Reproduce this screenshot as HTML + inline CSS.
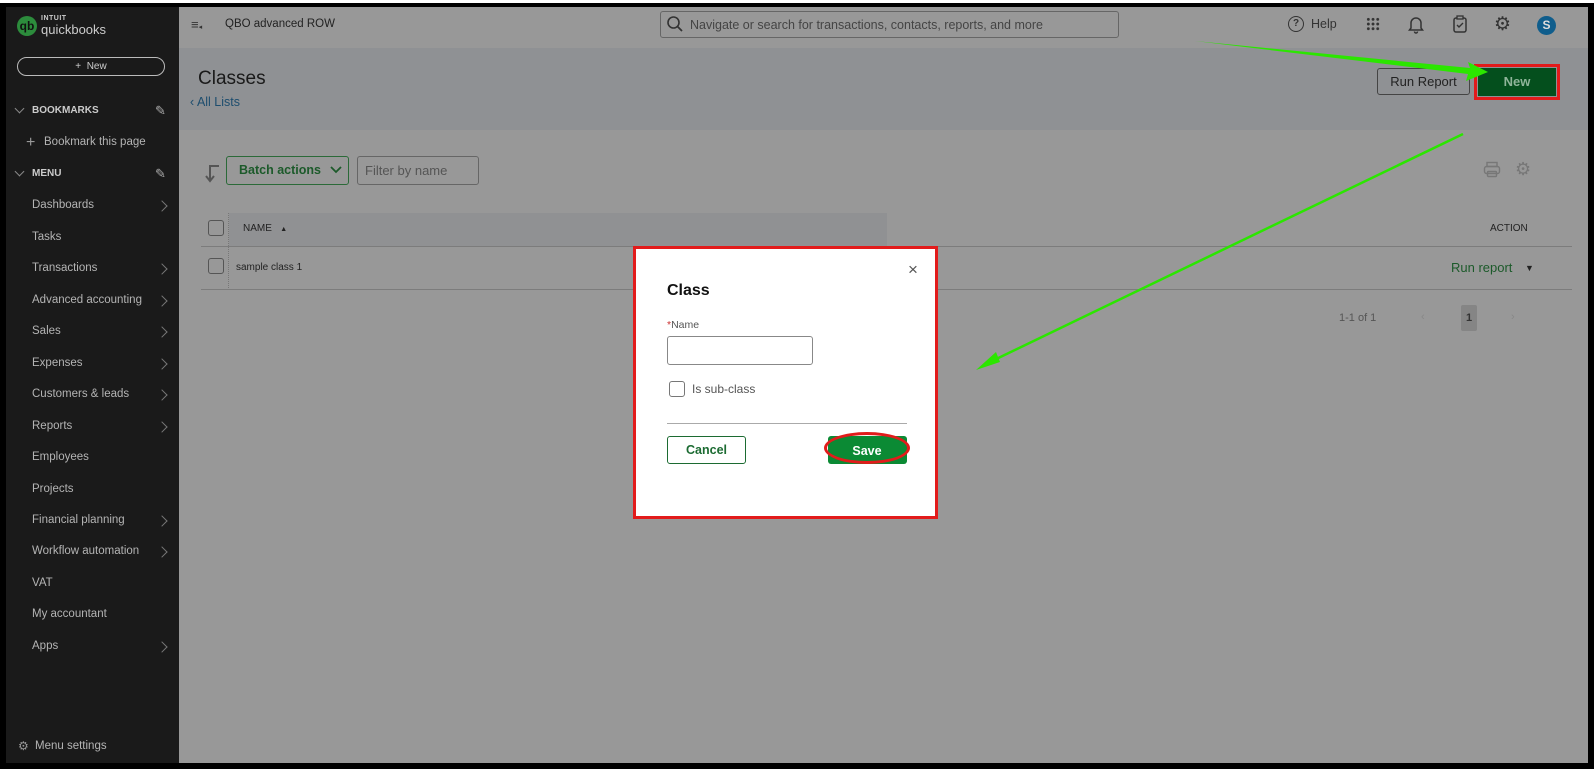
<!DOCTYPE html>
<html><head><meta charset="utf-8"><style>
*{margin:0;padding:0;box-sizing:border-box}
body{width:1594px;height:771px;background:#fff;position:relative;overflow:hidden;font-family:"Liberation Sans",Arial,sans-serif}
.a{position:absolute}
.frame{left:0;top:3px;width:1594px;height:766px;background:#000}
.main{left:6px;top:7px;width:1582px;height:756px;background:#989898;overflow:hidden}
.side{left:6px;top:7px;width:173px;height:756px;background:#1a1a1a;color:#b0b0b0;font-size:11px}
.mi{position:absolute;left:26px;font-size:11.5px;color:#b4b4b4}
.chev{position:absolute;left:152px;width:8px;height:8px;border-right:1.3px solid #777;border-top:1.3px solid #777;transform:rotate(45deg)}
.top{left:179px;top:7px;width:1409px;height:41px;background:#989898}
.hdr{left:179px;top:48px;width:1409px;height:82px;background:#8f9194}
</style></head><body>
<div class="a frame"></div>
<div class="a main"></div>
<div class="a top"></div>
<div class="a hdr"></div>
<div class="a side">
  <div class="a" style="left:11px;top:9px;width:20px;height:20px;border-radius:50%;background:#2c8c3c;color:#111;font-size:12px;font-weight:bold;text-align:center;line-height:20px">qb</div>
  <div class="a" style="left:35px;top:8px;font-size:7px;font-weight:bold;color:#ccc;letter-spacing:.5px">INTUIT</div>
  <div class="a" style="left:35px;top:15px;font-size:13px;color:#ccc">quickbooks</div>
  <div class="a" style="left:11px;top:50px;width:148px;height:19px;border:1px solid #bbb;border-radius:10px;text-align:center;font-size:10px;line-height:17px;color:#ccc">+&nbsp; New</div>
  <div class="a" style="left:10px;top:98px;width:7px;height:7px;border-left:1px solid #888;border-bottom:1px solid #888;transform:rotate(-45deg)"></div>
  <div class="a" style="left:26px;top:98px;font-size:10px;font-weight:bold;color:#ccc">BOOKMARKS</div>
  <div class="a" style="left:149px;top:96px;color:#aaa;font-size:13px">✎</div>
  <div class="a" style="left:20px;top:127px;font-size:16px;color:#999">+</div>
  <div class="a" style="left:38px;top:129px;font-size:11.5px;color:#b4b4b4">Bookmark this page</div>
  <div class="a" style="left:10px;top:161px;width:7px;height:7px;border-left:1px solid #888;border-bottom:1px solid #888;transform:rotate(-45deg)"></div>
  <div class="a" style="left:26px;top:161px;font-size:10px;font-weight:bold;color:#ccc">MENU</div>
  <div class="a" style="left:149px;top:159px;color:#aaa;font-size:13px">✎</div>
  <div class="mi" style="top:192px">Dashboards</div><div class="chev" style="top:195px"></div>
  <div class="mi" style="top:224px">Tasks</div>
  <div class="mi" style="top:255px">Transactions</div><div class="chev" style="top:258px"></div>
  <div class="mi" style="top:287px">Advanced accounting</div><div class="chev" style="top:290px"></div>
  <div class="mi" style="top:318px">Sales</div><div class="chev" style="top:321px"></div>
  <div class="mi" style="top:350px">Expenses</div><div class="chev" style="top:353px"></div>
  <div class="mi" style="top:381px">Customers &amp; leads</div><div class="chev" style="top:384px"></div>
  <div class="mi" style="top:413px">Reports</div><div class="chev" style="top:416px"></div>
  <div class="mi" style="top:444px">Employees</div>
  <div class="mi" style="top:476px">Projects</div>
  <div class="mi" style="top:507px">Financial planning</div><div class="chev" style="top:510px"></div>
  <div class="mi" style="top:538px">Workflow automation</div><div class="chev" style="top:541px"></div>
  <div class="mi" style="top:570px">VAT</div>
  <div class="mi" style="top:601px">My accountant</div>
  <div class="mi" style="top:633px">Apps</div><div class="chev" style="top:636px"></div>
  <div class="a" style="left:12px;top:732px;font-size:12px;color:#999">⚙</div>
  <div class="a" style="left:29px;top:733px;font-size:11.5px;color:#b4b4b4">Menu settings</div>
</div>
<div class="a" style="left:191px;top:17px;font-size:13px;color:#333">≡<span style="font-size:7px">◂</span></div>
<div class="a" style="left:225px;top:18px;font-size:11.5px;color:#222">QBO advanced ROW</div>
<div class="a" style="left:660px;top:11px;width:459px;height:27px;border:1px solid #666;border-radius:3px"></div>
<svg class="a" style="left:666px;top:15px" width="18" height="18"><circle cx="7.5" cy="7.5" r="5.5" fill="none" stroke="#333" stroke-width="1.6"/><line x1="11.5" y1="11.5" x2="16" y2="16" stroke="#333" stroke-width="1.8"/></svg>
<div class="a" style="left:690px;top:18px;font-size:12.5px;color:#444">Navigate or search for transactions, contacts, reports, and more</div>
<div class="a" style="left:1288px;top:16px;width:16px;height:16px;border:1.5px solid #333;border-radius:50%;font-size:10px;text-align:center;line-height:13px;color:#333;font-weight:bold">?</div>
<div class="a" style="left:1311px;top:17px;font-size:12.5px;color:#333">Help</div>
<div class="a" style="left:1366px;top:17px;width:14px;height:14px;background:radial-gradient(circle,#333 1.3px,transparent 1.6px) 0 0/4.7px 4.7px"></div>
<svg class="a" style="left:1408px;top:15px" width="16" height="19"><path d="M3 13V8a5 5 0 0 1 10 0v5l1.5 2h-13z M6.5 16.5a1.5 1.5 0 0 0 3 0" fill="none" stroke="#333" stroke-width="1.5"/></svg>
<svg class="a" style="left:1452px;top:15px" width="16" height="19"><rect x="2" y="3" width="12" height="14" rx="2" fill="none" stroke="#333" stroke-width="1.5"/><rect x="5" y="1" width="6" height="3" fill="#989898" stroke="#333" stroke-width="1.3"/><path d="M5 10l2 2 4-4" fill="none" stroke="#333" stroke-width="1.4"/></svg>
<div class="a" style="left:1494px;top:13px;font-size:19px;color:#333">⚙</div>
<div class="a" style="left:1537px;top:16px;width:19px;height:19px;border-radius:50%;background:#0f5d8c;color:#ddd;font-size:12px;font-weight:bold;text-align:center;line-height:19px">S</div>
<div class="a" style="left:198px;top:68px;font-size:19px;color:#1a1a1a">Classes</div>
<div class="a" style="left:190px;top:95px;font-size:12.5px;color:#1d4d6e">‹ All Lists</div>
<div class="a" style="left:1377px;top:68px;width:93px;height:27px;border:1px solid #444;border-radius:3px;font-size:13px;text-align:center;line-height:25px;color:#222">Run Report</div>
<div class="a" style="left:1474px;top:64px;width:86px;height:36px;border:3px solid #e21b1b"></div>
<div class="a" style="left:1478px;top:68px;width:78px;height:28px;background:#044f1d;color:#8fb59a;font-weight:bold;font-size:13px;text-align:center;line-height:28px">New</div>
<svg class="a" style="left:204px;top:164px" width="16" height="20"><path d="M15 2H6v14" fill="none" stroke="#555" stroke-width="2"/><path d="M2 12l4 5 4-5" fill="none" stroke="#555" stroke-width="2"/></svg>
<div class="a" style="left:226px;top:156px;width:123px;height:29px;border:1px solid #2b6a38;border-radius:3px;font-size:12.5px;color:#1c5a2a;font-weight:bold;line-height:27px;padding-left:12px">Batch actions</div>
<svg class="a" style="left:330px;top:165px" width="12" height="10"><path d="M1 2l5 5 5-5" fill="none" stroke="#1c5a2a" stroke-width="1.8"/></svg>
<div class="a" style="left:357px;top:156px;width:122px;height:29px;border:1px solid #666;border-radius:3px;font-size:13px;color:#555;line-height:27px;padding-left:7px">Filter by name</div>
<svg class="a" style="left:1483px;top:161px" width="18" height="18"><rect x="4" y="1.5" width="10" height="4" fill="none" stroke="#777" stroke-width="1.4"/><rect x="1.5" y="5.5" width="15" height="7" rx="2" fill="none" stroke="#777" stroke-width="1.4"/><rect x="4.5" y="10.5" width="9" height="5" rx="1" fill="none" stroke="#777" stroke-width="1.4"/></svg>
<div class="a" style="left:1515px;top:159px;font-size:18px;color:#777">⚙</div>
<div class="a" style="left:229px;top:213px;width:658px;height:33px;background:#909193"></div>
<div class="a" style="left:228px;top:213px;width:1px;height:77px;border-left:1px dotted #777"></div>
<div class="a" style="left:208px;top:220px;width:16px;height:16px;border:1px solid #555;border-radius:3px"></div>
<div class="a" style="left:243px;top:223px;font-size:10px;color:#222">NAME &nbsp; <span style="font-size:7px">▲</span></div>
<div class="a" style="left:1490px;top:223px;font-size:10px;color:#222">ACTION</div>
<div class="a" style="left:201px;top:246px;width:1371px;height:1px;background:#7c7c7c"></div>
<div class="a" style="left:208px;top:258px;width:16px;height:16px;border:1px solid #555;border-radius:3px"></div>
<div class="a" style="left:236px;top:262px;font-size:10px;color:#222">sample class 1</div>
<div class="a" style="left:1451px;top:260px;font-size:13px;color:#1c5a2a">Run report</div>
<div class="a" style="left:1525px;top:263px;font-size:9px;color:#222">▼</div>
<div class="a" style="left:201px;top:289px;width:1371px;height:1px;background:#7c7c7c"></div>
<div class="a" style="left:1339px;top:312px;font-size:11px;color:#555">1-1 of 1</div>
<div class="a" style="left:1421px;top:311px;font-size:11px;color:#888">‹</div>
<div class="a" style="left:1461px;top:305px;width:16px;height:26px;background:#858585;border-radius:2px;font-size:11px;color:#333;font-weight:bold;text-align:center;line-height:26px">1</div>
<div class="a" style="left:1511px;top:311px;font-size:11px;color:#888">›</div>
<div class="a" style="left:633px;top:246px;width:305px;height:273px;border:3px solid #e21b1b;background:#fff"></div>
<div class="a" style="left:908px;top:260px;font-size:17px;color:#555">×</div>
<div class="a" style="left:667px;top:282px;font-size:16px;font-weight:bold;color:#111">Class</div>
<div class="a" style="left:667px;top:319px;font-size:10.5px;color:#555"><span style="color:#c33">*</span>Name</div>
<div class="a" style="left:667px;top:336px;width:146px;height:29px;border:1px solid #888;border-radius:3px"></div>
<div class="a" style="left:669px;top:381px;width:16px;height:16px;border:1px solid #777;border-radius:3px"></div>
<div class="a" style="left:692px;top:382px;font-size:12px;color:#555">Is sub-class</div>
<div class="a" style="left:667px;top:423px;width:240px;height:1px;background:#aaa"></div>
<div class="a" style="left:667px;top:436px;width:79px;height:28px;border:1px solid #1c6b32;border-radius:3px;font-size:12.5px;font-weight:bold;color:#1c6b32;text-align:center;line-height:26px">Cancel</div>
<div class="a" style="left:828px;top:436px;width:79px;height:28px;background:#0b8a34;border-radius:3px"></div>
<div class="a" style="left:824px;top:432px;width:86px;height:32px;border:3px solid #e21b1b;border-radius:50%;font-size:12.5px;font-weight:bold;color:#fff;text-align:center;line-height:32px">Save</div>
<svg class="a" style="left:0;top:0" width="1594" height="771">
<polygon points="1195,41 1470,68 1468,62 1488,72 1466,81 1468,74" fill="#2be600"/>
<line x1="1463" y1="134" x2="990" y2="362" stroke="#2be600" stroke-width="2.5"/>
<polygon points="976,370 996,352 1000,362" fill="#2be600"/>
</svg>
</body></html>
